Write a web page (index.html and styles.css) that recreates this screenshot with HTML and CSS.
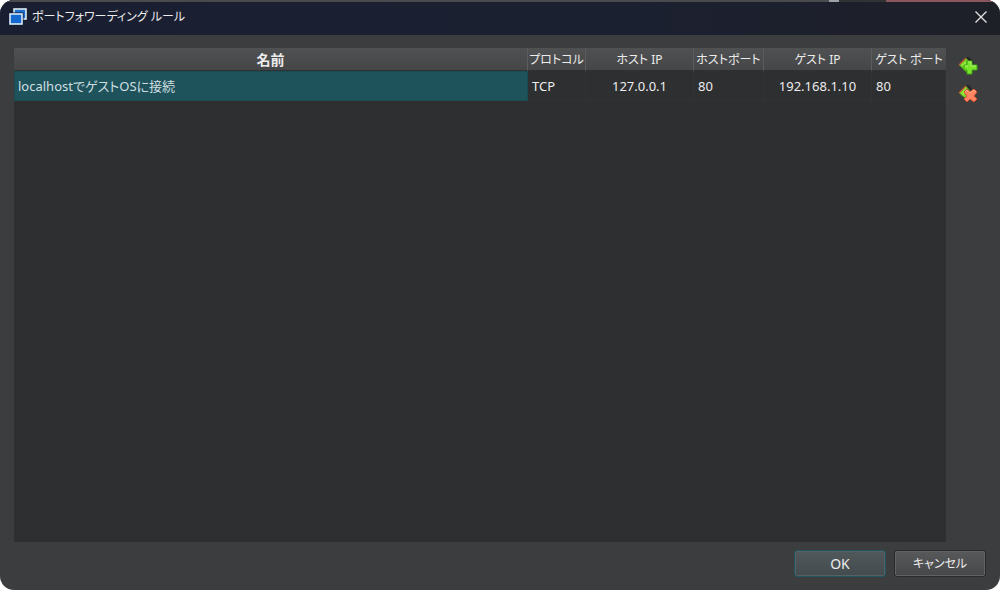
FILE: index.html
```
<!DOCTYPE html>
<html lang="ja">
<head>
<meta charset="utf-8">
<title>ポートフォワーディング ルール</title>
<link rel="stylesheet" href="styles.css">
</head>
<body>
<main class="dialog">
  <header class="titlebar">
    <svg class="app-icon" width="20" height="20" viewBox="0 0 20 20" aria-hidden="true">
      <rect x="6" y="2" width="12" height="10" fill="#1c6fd0" stroke="#dcebf4" stroke-width="1.6"/>
      <rect x="2" y="7" width="12" height="10" fill="#0f6ad2" stroke="#101c3a" stroke-width="3"/>
      <rect x="2" y="7" width="12" height="10" fill="#1369d0" stroke="#dcebf4" stroke-width="1.6"/>
    </svg>
    <h1 class="title">ポートフォワーディング ルール</h1>
    <button class="close" type="button" aria-label="閉じる">
      <svg width="14" height="14" viewBox="0 0 14 14"><path d="M1.5 1.5 12.5 12.5M12.5 1.5 1.5 12.5" stroke="#e4e4e4" stroke-width="1.3"/></svg>
    </button>
  </header>
  <section class="content">
    <div class="rules">
      <table class="table">
        <colgroup>
          <col><col class="col-protocol"><col class="col-ip"><col class="col-host-port"><col class="col-ip"><col class="col-guest-port">
        </colgroup>
        <thead>
          <tr><th class="current">名前</th><th>プロトコル</th><th>ホスト IP</th><th>ホストポート</th><th>ゲスト IP</th><th>ゲスト ポート</th></tr>
        </thead>
        <tbody>
          <tr><td class="selected">localhostでゲストOSに接続</td><td>TCP</td><td class="center">127.0.0.1</td><td>80</td><td class="center">192.168.1.10</td><td>80</td></tr>
        </tbody>
      </table>
    </div>
    <div class="tools">
      <button class="tool" type="button" aria-label="追加">
        <svg width="20" height="18" viewBox="0 0 20 18">
          <path d="M8 0h3l5 6-4 3z" fill="#252628"/>
          <path d="M1 8 8 1l4 4v8l-4 2z" fill="#62c51c" stroke="#477b25"/>
          <path d="M1 8 8 1" stroke="#c8572c" stroke-width="1.2"/>
          <path d="M3 8 8 3v9z" fill="#91e83c"/>
          <path d="M9 4h5v4h5v5h-5v4H9v-4H6V8h3z" fill="#79e62c" stroke="#43a512"/>
          <path d="M10 5h3v4h5M7 9h3" fill="none" stroke="#a7f467"/>
        </svg>
      </button>
      <button class="tool" type="button" aria-label="削除">
        <svg width="20" height="18" viewBox="0 0 20 18">
          <path d="M8 0h3l3 4-4 3z" fill="#252628"/>
          <path d="M1 8 8 1l4 5-4 8z" fill="#78d42d" stroke="#477b25"/>
          <path d="M1 8 8 1" stroke="#c8572c" stroke-width="1.2"/>
          <path d="M3 8 8 3v4l-3 4z" fill="#91e83c"/>
          <path d="m6 7 3-3 3 3 4-3 3 3-3 4 3 3-3 3-4-3-3 3-3-3 3-3z" fill="#ff845f" stroke="#d85030"/>
          <path d="m7 7 2-2 3 3 4-3 2 2" fill="none" stroke="#ffad8b"/>
        </svg>
      </button>
    </div>
  </section>
  <footer class="actions">
    <button class="button default" type="button">OK</button>
    <button class="button" type="button">キャンセル</button>
  </footer>
</main>
</body>
</html>
```
FILE: styles.css
```
* { box-sizing: border-box; }
body {
  margin: 0;
  background: #fff;
  color: #ececec;
  font: 13px/20px "Noto Sans", "Noto Sans CJK JP", sans-serif;
  font-feature-settings: "palt";
}
button { font: inherit; font-feature-settings: inherit; color: inherit; }
svg { display: block; }
.dialog {
  display: flex;
  flex-direction: column;
  min-height: 100vh;
  overflow: hidden;
  border-radius: 14px;
  background: #3c3d3f;
}
.titlebar {
  display: flex;
  align-items: center;
  gap: 4px;
  height: 35px;
  padding: 0 12px 3px 8px;
  border-style: solid;
  border-width: 2px 0 0;
  border-image: linear-gradient(90deg, #4a4b4d 82.8%, #9aa2a8 82.8%, #9aa2a8 83.8%, #303234 83.8%, #303234 88.4%, #8b565d 88.4%) 2;
  background: linear-gradient(90deg, #191f31, #1b2031 60%, #1e2028);
}
.title { flex: 1; margin: 0; font-size: 12px; font-weight: 400; }
.close { padding: 0; border: 0; background: none; }
.content { display: flex; flex: 1; padding: 13px 14px 0; }
.rules { flex: 1; min-width: 0; background: #2e2f31; }
.table { width: 100%; table-layout: fixed; border-collapse: separate; border-spacing: 0; }
.col-protocol { width: 58px; }
.col-ip { width: 108px; }
.col-host-port { width: 70px; }
.col-guest-port { width: 74px; }
th, td { padding: 0 4px; white-space: nowrap; }
th {
  height: 23px;
  padding: 1px 0 0;
  border-right: 1px solid #5b5c5e;
  border-bottom: 1px solid #303133;
  background: linear-gradient(#505153, #454648);
  font-size: 12px;
  font-weight: 400;
}
.current { font-size: 14px; font-weight: 700; }
th:last-child { border-right: 0; }
td { height: 30px; border-right: 1px solid #323335; border-bottom: 1px solid #323335; text-align: left; }
.center { text-align: center; }
.selected { border: 1px solid #1a4c53; background: #1f535b; color: #cfdfe1; padding-left: 3px; }
.tools { display: flex; flex-direction: column; gap: 10px; padding: 9px 8px 0 12px; }
.tool { padding: 0; border: 0; background: none; }
.actions { display: flex; justify-content: flex-end; gap: 8px; padding: 8px 14px 13px; }
.button {
  width: 92px;
  height: 27px;
  padding: 0;
  border: 1px solid #292a2c;
  border-radius: 3px;
  background: linear-gradient(#58595b, #464749);
  box-shadow: inset 0 0 0 1px #626365;
  font-size: 12px;
}
.default { border-color: #21555c; background: linear-gradient(#50585b, #434b4e); box-shadow: inset 0 0 0 1px #556164; font-size: 14px; }
```
